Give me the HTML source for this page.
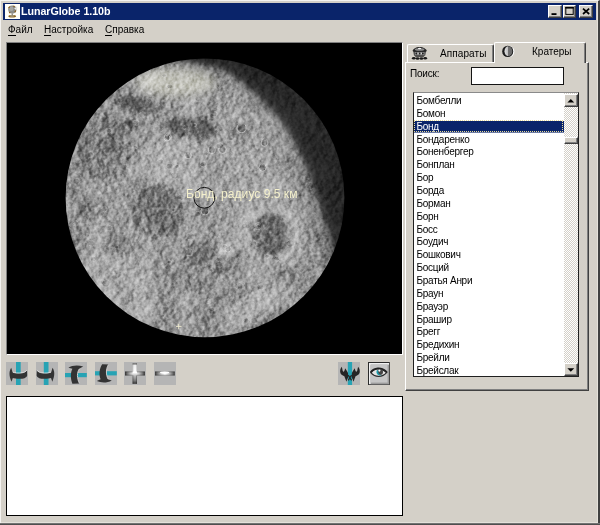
<!DOCTYPE html>
<html>
<head>
<meta charset="utf-8">
<title>LunarGlobe 1.10b</title>
<style>
html,body{margin:0;padding:0;}
body{width:600px;height:525px;overflow:hidden;background:#d4d0c8;position:relative;font-family:"Liberation Sans",sans-serif;font-size:10px;color:#000;}
.abs{position:absolute;}
#frame{left:0;top:0;width:600px;height:525px;box-sizing:border-box;border-top:1px solid #f4f3f0;border-left:1px solid #f4f3f0;border-right:2px solid #404040;border-bottom:none;}
#fb{left:0;top:523px;width:600px;height:2px;background:linear-gradient(#858585,#3c3c3c);}
#frame2{left:1px;top:1px;width:597px;height:522px;box-sizing:border-box;border-right:1px solid #e4e1da;border-bottom:1px solid #e4e1da;}
#title{left:3px;top:3px;width:593px;height:17px;background:#0a246a;}
#ticon{left:5px;top:4px;width:15px;height:15px;background:#fffef8;}
#ttext{left:21px;top:5px;height:12px;line-height:12px;font-size:10.7px;font-weight:bold;color:#fff;white-space:nowrap;letter-spacing:-0.05px;}
.tbtn{top:5px;width:13px;height:12.5px;background:#d4d0c8;box-sizing:border-box;border-top:1px solid #fff;border-left:1px solid #fff;border-right:1px solid #404040;border-bottom:1px solid #404040;box-shadow:inset -1px -1px 0 #808080;}
.menu{top:24.6px;height:10.6px;line-height:10.6px;font-size:10px;white-space:nowrap;}
.menu u{text-decoration:none;border-bottom:1px solid #000;}
#canvasb{left:6px;top:42px;width:397px;height:312.7px;box-sizing:border-box;border-top:1px solid #808080;border-left:1px solid #808080;border-right:1px solid #fff;border-bottom:1px solid #fff;background:#000;}
#canvas{left:7px;top:43px;width:395px;height:310.7px;background:#000;overflow:hidden;}
.tb{top:361.7px;width:21.8px;height:23px;background:#b5b5b5;overflow:hidden;}
#log{left:6px;top:395.9px;width:397px;height:120.1px;box-sizing:border-box;background:#fff;border:1px solid #000;}
#panel{left:405px;top:61.5px;width:184px;height:329.5px;box-sizing:border-box;border-top:1px solid #fff;border-left:1px solid #fff;border-right:1px solid #404040;border-bottom:1px solid #404040;box-shadow:inset -1px -1px 0 #808080;}
#tab1{left:407px;top:44px;width:86.5px;height:17.5px;box-sizing:border-box;border-top:1px solid #fff;border-left:1px solid #fff;border-right:1px solid #404040;border-radius:2px 2px 0 0;box-shadow:inset -1px 0 0 #808080;}
#tab2{left:494px;top:42px;width:92px;height:20.5px;box-sizing:border-box;background:#d4d0c8;border-top:1px solid #fff;border-left:1px solid #fff;border-right:1px solid #404040;border-radius:2px 2px 0 0;box-shadow:inset -1px 0 0 #808080;}
.lbl,.menu,#ttext,#items{will-change:transform;}
.lbl{white-space:nowrap;font-size:10px;line-height:12px;height:12px;}
#search{left:470.7px;top:67px;width:93.8px;height:18px;box-sizing:border-box;background:#fff;border:1px solid #141414;}
#list{left:413px;top:92.2px;width:166px;height:285.3px;box-sizing:border-box;background:#fff;border:1px solid #202020;border-top-color:#8a8a8a;overflow:hidden;}
#items{left:0;top:1.7px;width:150px;}
#items div{height:12.87px;line-height:12.87px;padding-left:2.5px;font-size:10px;white-space:nowrap;letter-spacing:-0.28px;}
#items div.sel{background:linear-gradient(#0a246a,#0a246a) 0 -0.6px/100% 12.2px no-repeat;color:#fff;position:relative;}
#items div.sel:before{content:"";position:absolute;left:0;top:-0.9px;width:149.4px;height:12.4px;box-sizing:border-box;border:1px dotted #e8dc9c;}
#sb{left:150.3px;top:0;width:14px;height:283.3px;background:repeating-conic-gradient(#ffffff 0% 25%, #d4d0c8 0% 50%) 0 0/2px 2px;}
.sbtn{left:0;width:14px;height:13.6px;box-sizing:border-box;background:#d4d0c8;border-top:1px solid #fff;border-left:1px solid #fff;border-right:1px solid #404040;border-bottom:1px solid #404040;box-shadow:inset -1px -1px 0 #808080;}
</style>
</head>
<body>
<div id="frame" class="abs"></div>
<div id="frame2" class="abs"></div>
<div id="fb" class="abs"></div>

<!-- title bar -->
<div id="title" class="abs"></div>
<div id="ticon" class="abs">
<svg width="15" height="15" viewBox="0 0 15 15">
<circle cx="7.3" cy="5.6" r="4.1" fill="#8c8c88"/>
<circle cx="6.3" cy="4.8" r="2.2" fill="#a8a8a4"/>
<path d="M3.6 4.2 L4.6 2.6 M9.8 8.2 L10.8 6.4 M4.2 8.2 L5.2 9.2 M8.4 2.0 L9.6 2.8" stroke="#8a5a14" stroke-width="1.1"/>
<path d="M9.2 4.6 L12 2.8 L11.2 6" fill="#f4f4f0" stroke="#d0d0cc" stroke-width="0.4"/>
<ellipse cx="7.2" cy="12.2" rx="3.9" ry="1.3" fill="#8a6420"/>
<ellipse cx="7.0" cy="11.9" rx="2.0" ry="0.6" fill="#b8b4a8"/>
<rect x="6.6" y="9.6" width="1.2" height="2" fill="#80796a"/>
</svg>
</div>
<div id="ttext" class="abs">LunarGlobe 1.10b</div>
<div class="abs tbtn" style="left:548.2px;width:13.4px;"><svg class="abs" style="left:0;top:0" width="11" height="11" viewBox="0 0 11 11"><rect x="2.5" y="7.2" width="5" height="1.8" fill="#000"/></svg></div>
<div class="abs tbtn" style="left:563px;"><svg class="abs" style="left:0;top:0" width="11" height="11" viewBox="0 0 11 11"><rect x="1.8" y="1.4" width="7.4" height="7" fill="none" stroke="#000" stroke-width="1"/><rect x="1.3" y="0.9" width="8.4" height="1.7" fill="#000"/></svg></div>
<div class="abs tbtn" style="left:579px;width:13.8px;"><svg class="abs" style="left:0;top:0" width="11" height="11" viewBox="0 0 11 11"><path d="M3 2.6 L9.2 8 M9.2 2.6 L3 8" stroke="#000" stroke-width="1.7"/></svg></div>

<!-- menu -->
<div class="abs menu" style="left:8px;"><u>Ф</u>айл</div>
<div class="abs menu" style="left:44px;"><u>Н</u>астройка</div>
<div class="abs menu" style="left:105px;"><u>С</u>правка</div>

<!-- canvas -->
<div id="canvasb" class="abs"></div>
<div id="canvas" class="abs">
<svg id="moon" class="abs" style="left:0;top:0" width="395.5" height="310.7" viewBox="7 43 395.5 310.7">
<defs>
<clipPath id="disc"><circle cx="205" cy="197.8" r="139.4"/></clipPath>
<radialGradient id="base" cx="0.45" cy="0.5" r="0.55">
<stop offset="0" stop-color="#a0a0a0"/><stop offset="0.8" stop-color="#989898"/><stop offset="1" stop-color="#868686"/>
</radialGradient>
<filter id="b3" x="-30%" y="-30%" width="160%" height="160%"><feGaussianBlur stdDeviation="2.2"/></filter>
<filter id="b5" x="-30%" y="-30%" width="160%" height="160%"><feGaussianBlur stdDeviation="5"/></filter>
<filter id="b2" x="-30%" y="-30%" width="160%" height="160%"><feGaussianBlur stdDeviation="1.6"/></filter>
<filter id="b12" x="-30%" y="-30%" width="160%" height="160%"><feGaussianBlur stdDeviation="10"/></filter>
<filter id="b2h" x="-30%" y="-30%" width="160%" height="160%"><feGaussianBlur stdDeviation="2.5"/></filter>
<filter id="b4" x="-30%" y="-30%" width="160%" height="160%"><feGaussianBlur stdDeviation="4"/></filter>
<filter id="b05" x="-30%" y="-30%" width="160%" height="160%"><feGaussianBlur stdDeviation="0.5"/></filter>
<filter id="b6" x="-30%" y="-30%" width="160%" height="160%"><feGaussianBlur stdDeviation="6"/></filter>
<filter id="noise" x="0" y="0" width="100%" height="100%" color-interpolation-filters="sRGB">
<feTurbulence type="fractalNoise" baseFrequency="0.38" numOctaves="2" seed="7" result="n"/>
<feColorMatrix type="matrix" values="0.6 0.6 0.6 0 -0.4  0.6 0.6 0.6 0 -0.4  0.6 0.6 0.6 0 -0.4  0 0 0 0 1"/>
</filter>
<filter id="bump" x="0" y="0" width="100%" height="100%" color-interpolation-filters="sRGB">
<feTurbulence type="fractalNoise" baseFrequency="0.16" numOctaves="3" seed="12" result="t"/>
<feDiffuseLighting in="t" surfaceScale="1.5" diffuseConstant="1" lighting-color="#ffffff"><feDistantLight azimuth="190" elevation="30"/></feDiffuseLighting>
</filter>
<filter id="noise2" x="0" y="0" width="100%" height="100%" color-interpolation-filters="sRGB">
<feTurbulence type="fractalNoise" baseFrequency="0.045" numOctaves="3" seed="3" result="n"/>
<feColorMatrix type="matrix" values="0.6 0.6 0.6 0 -0.4  0.6 0.6 0.6 0 -0.4  0.6 0.6 0.6 0 -0.4  0 0 0 0 1"/>
</filter>
</defs>
<g clip-path="url(#disc)">
<circle cx="205" cy="197.8" r="140.4" fill="url(#base)"/>
<g id="blobs">
<!-- bright areas -->
<g filter="url(#b5)">
<ellipse cx="176" cy="82" rx="40" ry="14" fill="#c4c4bc"/>
<ellipse cx="170" cy="165" rx="35" ry="20" fill="#aeaeae"/>
<ellipse cx="270" cy="234" rx="33" ry="32" fill="#b4b4b4"/>
<ellipse cx="120" cy="285" rx="42" ry="24" fill="#adadad" transform="rotate(40 120 285)"/>
<ellipse cx="255" cy="305" rx="42" ry="15" fill="#ababab" transform="rotate(-32 255 305)"/>
<ellipse cx="250" cy="190" rx="36" ry="20" fill="#a4a4a4"/>
<ellipse cx="252" cy="135" rx="40" ry="38" fill="#a2a2a2"/>
</g>
<!-- dark maria -->
<g filter="url(#b3)">
<ellipse cx="136" cy="104.5" rx="24" ry="8" fill="#666666" transform="rotate(10 136 104.5)"/>
<ellipse cx="106" cy="150" rx="27" ry="32" fill="#7e7e7e" transform="rotate(18 106 150)"/>
<ellipse cx="192" cy="128" rx="25" ry="11" fill="#666666" transform="rotate(6 192 128)"/>
<ellipse cx="241" cy="130" rx="12" ry="8" fill="#868686"/>
<ellipse cx="158" cy="212" rx="27" ry="27" fill="#787878"/>
<ellipse cx="94" cy="209" rx="14" ry="10" fill="#808080"/>
<ellipse cx="119" cy="245" rx="16" ry="10" fill="#868686" transform="rotate(25 119 245)"/>
<ellipse cx="270" cy="234" rx="20" ry="20" fill="#6c6c6c" />
<ellipse cx="207" cy="258" rx="24" ry="15" fill="#7e7e7e" transform="rotate(20 207 258)"/>
<ellipse cx="196" cy="280" rx="18" ry="12" fill="#868686"/>
<ellipse cx="170" cy="280" rx="16" ry="13" fill="#909090"/>
<ellipse cx="205" cy="314" rx="18" ry="7" fill="#888888"/>
<ellipse cx="245" cy="284" rx="15" ry="9" fill="#909090"/>
</g>
<g filter="url(#b3)">
<ellipse cx="225" cy="249" rx="9" ry="7" fill="#bcbcbc"/>
</g>
<g filter="url(#b05)"><circle cx="211.8" cy="150" r="3.6" fill="#000" fill-opacity="0.18" stroke="#e0e0e0" stroke-opacity="0.75" stroke-width="0.9"/><path d="M209.3 147.5 A3.6 3.6 0 0 1 214.3 147.5" stroke="#000" stroke-opacity="0.35" stroke-width="0.9" fill="none"/><circle cx="222.5" cy="149.7" r="3.8" fill="#000" fill-opacity="0.18" stroke="#e0e0e0" stroke-opacity="0.75" stroke-width="0.9"/><path d="M219.8 147.0 A3.8 3.8 0 0 1 225.2 147.0" stroke="#000" stroke-opacity="0.35" stroke-width="0.9" fill="none"/><circle cx="168" cy="137" r="3.2" fill="#000" fill-opacity="0.18" stroke="#e0e0e0" stroke-opacity="0.75" stroke-width="0.9"/><path d="M165.8 134.8 A3.2 3.2 0 0 1 170.2 134.8" stroke="#000" stroke-opacity="0.35" stroke-width="0.9" fill="none"/><circle cx="188" cy="155.5" r="3.2" fill="#000" fill-opacity="0.18" stroke="#e0e0e0" stroke-opacity="0.75" stroke-width="0.9"/><path d="M185.8 153.3 A3.2 3.2 0 0 1 190.2 153.3" stroke="#000" stroke-opacity="0.35" stroke-width="0.9" fill="none"/><circle cx="264.5" cy="143" r="3.4" fill="#000" fill-opacity="0.18" stroke="#e0e0e0" stroke-opacity="0.75" stroke-width="0.9"/><path d="M262.1 140.6 A3.4 3.4 0 0 1 266.9 140.6" stroke="#000" stroke-opacity="0.35" stroke-width="0.9" fill="none"/><circle cx="262.6" cy="167.6" r="3.6" fill="#000" fill-opacity="0.18" stroke="#e0e0e0" stroke-opacity="0.75" stroke-width="0.9"/><path d="M260.1 165.1 A3.6 3.6 0 0 1 265.1 165.1" stroke="#000" stroke-opacity="0.35" stroke-width="0.9" fill="none"/><circle cx="241.6" cy="128" r="4.6" fill="#000" fill-opacity="0.18" stroke="#e0e0e0" stroke-opacity="0.75" stroke-width="0.9"/><path d="M238.4 124.8 A4.6 4.6 0 0 1 244.8 124.8" stroke="#000" stroke-opacity="0.35" stroke-width="0.9" fill="none"/><circle cx="167" cy="138" r="3" fill="#000" fill-opacity="0.18" stroke="#e0e0e0" stroke-opacity="0.75" stroke-width="0.9"/><path d="M164.9 135.9 A3 3 0 0 1 169.1 135.9" stroke="#000" stroke-opacity="0.35" stroke-width="0.9" fill="none"/><circle cx="205" cy="211" r="4" fill="#000" fill-opacity="0.18" stroke="#e0e0e0" stroke-opacity="0.75" stroke-width="0.9"/><path d="M202.2 208.2 A4 4 0 0 1 207.8 208.2" stroke="#000" stroke-opacity="0.35" stroke-width="0.9" fill="none"/><circle cx="228" cy="249" r="3" fill="#000" fill-opacity="0.18" stroke="#e0e0e0" stroke-opacity="0.75" stroke-width="0.9"/><path d="M225.9 246.9 A3 3 0 0 1 230.1 246.9" stroke="#000" stroke-opacity="0.35" stroke-width="0.9" fill="none"/></g>
<g filter="url(#b2)">
<circle cx="130" cy="123" r="3.6" fill="#3c3c3c"/>
</g>
<g><circle cx="109.6" cy="228.1" r="2.6" fill="#000" fill-opacity="0.10" stroke="#fff" stroke-opacity="0.28" stroke-width="0.8"/><path d="M107.8 226.3 A2.6 2.6 0 0 0 107.8 229.9" stroke="#000" stroke-opacity="0.3" stroke-width="0.8" fill="none"/><circle cx="87.5" cy="235.4" r="1.8" fill="#000" fill-opacity="0.10" stroke="#fff" stroke-opacity="0.28" stroke-width="0.8"/><path d="M86.2 234.1 A1.8 1.8 0 0 0 86.2 236.6" stroke="#000" stroke-opacity="0.3" stroke-width="0.8" fill="none"/><circle cx="241.7" cy="285.6" r="3.6" fill="#000" fill-opacity="0.10" stroke="#fff" stroke-opacity="0.28" stroke-width="0.8"/><path d="M239.2 283.1 A3.6 3.6 0 0 0 239.2 288.1" stroke="#000" stroke-opacity="0.3" stroke-width="0.8" fill="none"/><circle cx="161.0" cy="161.6" r="2.6" fill="#000" fill-opacity="0.10" stroke="#fff" stroke-opacity="0.28" stroke-width="0.8"/><path d="M159.2 159.8 A2.6 2.6 0 0 0 159.2 163.4" stroke="#000" stroke-opacity="0.3" stroke-width="0.8" fill="none"/><circle cx="190.9" cy="236.5" r="3.6" fill="#000" fill-opacity="0.10" stroke="#fff" stroke-opacity="0.28" stroke-width="0.8"/><path d="M188.4 234.0 A3.6 3.6 0 0 0 188.4 239.1" stroke="#000" stroke-opacity="0.3" stroke-width="0.8" fill="none"/><circle cx="136.4" cy="122.8" r="2.6" fill="#000" fill-opacity="0.10" stroke="#fff" stroke-opacity="0.28" stroke-width="0.8"/><path d="M134.6 121.0 A2.6 2.6 0 0 0 134.6 124.6" stroke="#000" stroke-opacity="0.3" stroke-width="0.8" fill="none"/><circle cx="308.1" cy="175.6" r="3.0" fill="#000" fill-opacity="0.10" stroke="#fff" stroke-opacity="0.28" stroke-width="0.8"/><path d="M306.0 173.5 A3.0 3.0 0 0 0 306.0 177.7" stroke="#000" stroke-opacity="0.3" stroke-width="0.8" fill="none"/><circle cx="142.8" cy="114.7" r="3.0" fill="#000" fill-opacity="0.10" stroke="#fff" stroke-opacity="0.28" stroke-width="0.8"/><path d="M140.7 112.6 A3.0 3.0 0 0 0 140.7 116.8" stroke="#000" stroke-opacity="0.3" stroke-width="0.8" fill="none"/><circle cx="227.0" cy="208.6" r="1.8" fill="#000" fill-opacity="0.10" stroke="#fff" stroke-opacity="0.28" stroke-width="0.8"/><path d="M225.7 207.4 A1.8 1.8 0 0 0 225.7 209.9" stroke="#000" stroke-opacity="0.3" stroke-width="0.8" fill="none"/><circle cx="109.6" cy="130.8" r="2.2" fill="#000" fill-opacity="0.10" stroke="#fff" stroke-opacity="0.28" stroke-width="0.8"/><path d="M108.1 129.2 A2.2 2.2 0 0 0 108.1 132.3" stroke="#000" stroke-opacity="0.3" stroke-width="0.8" fill="none"/><circle cx="91.2" cy="243.2" r="3.0" fill="#000" fill-opacity="0.10" stroke="#fff" stroke-opacity="0.28" stroke-width="0.8"/><path d="M89.1 241.1 A3.0 3.0 0 0 0 89.1 245.3" stroke="#000" stroke-opacity="0.3" stroke-width="0.8" fill="none"/><circle cx="211.3" cy="270.2" r="1.6" fill="#000" fill-opacity="0.10" stroke="#fff" stroke-opacity="0.28" stroke-width="0.8"/><path d="M210.2 269.1 A1.6 1.6 0 0 0 210.2 271.3" stroke="#000" stroke-opacity="0.3" stroke-width="0.8" fill="none"/><circle cx="157.3" cy="122.9" r="2.2" fill="#000" fill-opacity="0.10" stroke="#fff" stroke-opacity="0.28" stroke-width="0.8"/><path d="M155.8 121.4 A2.2 2.2 0 0 0 155.8 124.4" stroke="#000" stroke-opacity="0.3" stroke-width="0.8" fill="none"/><circle cx="122.3" cy="253.2" r="1.6" fill="#000" fill-opacity="0.10" stroke="#fff" stroke-opacity="0.28" stroke-width="0.8"/><path d="M121.2 252.1 A1.6 1.6 0 0 0 121.2 254.3" stroke="#000" stroke-opacity="0.3" stroke-width="0.8" fill="none"/><circle cx="184.6" cy="127.5" r="1.8" fill="#000" fill-opacity="0.10" stroke="#fff" stroke-opacity="0.28" stroke-width="0.8"/><path d="M183.3 126.2 A1.8 1.8 0 0 0 183.3 128.7" stroke="#000" stroke-opacity="0.3" stroke-width="0.8" fill="none"/><circle cx="181.3" cy="197.2" r="3.0" fill="#000" fill-opacity="0.10" stroke="#fff" stroke-opacity="0.28" stroke-width="0.8"/><path d="M179.2 195.1 A3.0 3.0 0 0 0 179.2 199.3" stroke="#000" stroke-opacity="0.3" stroke-width="0.8" fill="none"/><circle cx="212.5" cy="115.9" r="2.2" fill="#000" fill-opacity="0.10" stroke="#fff" stroke-opacity="0.28" stroke-width="0.8"/><path d="M211.0 114.4 A2.2 2.2 0 0 0 211.0 117.5" stroke="#000" stroke-opacity="0.3" stroke-width="0.8" fill="none"/><circle cx="106.3" cy="283.5" r="3.6" fill="#000" fill-opacity="0.10" stroke="#fff" stroke-opacity="0.28" stroke-width="0.8"/><path d="M103.8 281.0 A3.6 3.6 0 0 0 103.8 286.0" stroke="#000" stroke-opacity="0.3" stroke-width="0.8" fill="none"/><circle cx="264.4" cy="199.2" r="1.6" fill="#000" fill-opacity="0.10" stroke="#fff" stroke-opacity="0.28" stroke-width="0.8"/><path d="M263.3 198.1 A1.6 1.6 0 0 0 263.3 200.3" stroke="#000" stroke-opacity="0.3" stroke-width="0.8" fill="none"/><circle cx="75.6" cy="223.5" r="2.6" fill="#000" fill-opacity="0.10" stroke="#fff" stroke-opacity="0.28" stroke-width="0.8"/><path d="M73.8 221.7 A2.6 2.6 0 0 0 73.8 225.3" stroke="#000" stroke-opacity="0.3" stroke-width="0.8" fill="none"/><circle cx="117.0" cy="247.0" r="1.8" fill="#000" fill-opacity="0.10" stroke="#fff" stroke-opacity="0.28" stroke-width="0.8"/><path d="M115.8 245.7 A1.8 1.8 0 0 0 115.8 248.2" stroke="#000" stroke-opacity="0.3" stroke-width="0.8" fill="none"/><circle cx="216.2" cy="131.5" r="1.6" fill="#000" fill-opacity="0.10" stroke="#fff" stroke-opacity="0.28" stroke-width="0.8"/><path d="M215.1 130.4 A1.6 1.6 0 0 0 215.1 132.7" stroke="#000" stroke-opacity="0.3" stroke-width="0.8" fill="none"/><circle cx="197.9" cy="214.1" r="2.6" fill="#000" fill-opacity="0.10" stroke="#fff" stroke-opacity="0.28" stroke-width="0.8"/><path d="M196.1 212.2 A2.6 2.6 0 0 0 196.1 215.9" stroke="#000" stroke-opacity="0.3" stroke-width="0.8" fill="none"/><circle cx="206.3" cy="153.7" r="1.8" fill="#000" fill-opacity="0.10" stroke="#fff" stroke-opacity="0.28" stroke-width="0.8"/><path d="M205.0 152.5 A1.8 1.8 0 0 0 205.0 155.0" stroke="#000" stroke-opacity="0.3" stroke-width="0.8" fill="none"/><circle cx="200.3" cy="185.7" r="2.6" fill="#000" fill-opacity="0.10" stroke="#fff" stroke-opacity="0.28" stroke-width="0.8"/><path d="M198.5 183.9 A2.6 2.6 0 0 0 198.5 187.5" stroke="#000" stroke-opacity="0.3" stroke-width="0.8" fill="none"/><circle cx="220.2" cy="145.8" r="3.0" fill="#000" fill-opacity="0.10" stroke="#fff" stroke-opacity="0.28" stroke-width="0.8"/><path d="M218.1 143.7 A3.0 3.0 0 0 0 218.1 147.9" stroke="#000" stroke-opacity="0.3" stroke-width="0.8" fill="none"/><circle cx="239.5" cy="286.2" r="3.6" fill="#000" fill-opacity="0.10" stroke="#fff" stroke-opacity="0.28" stroke-width="0.8"/><path d="M237.0 283.7 A3.6 3.6 0 0 0 237.0 288.7" stroke="#000" stroke-opacity="0.3" stroke-width="0.8" fill="none"/><circle cx="214.5" cy="114.2" r="2.6" fill="#000" fill-opacity="0.10" stroke="#fff" stroke-opacity="0.28" stroke-width="0.8"/><path d="M212.6 112.4 A2.6 2.6 0 0 0 212.6 116.0" stroke="#000" stroke-opacity="0.3" stroke-width="0.8" fill="none"/><circle cx="267.7" cy="256.2" r="1.8" fill="#000" fill-opacity="0.10" stroke="#fff" stroke-opacity="0.28" stroke-width="0.8"/><path d="M266.4 255.0 A1.8 1.8 0 0 0 266.4 257.5" stroke="#000" stroke-opacity="0.3" stroke-width="0.8" fill="none"/><circle cx="326.7" cy="199.4" r="3.0" fill="#000" fill-opacity="0.10" stroke="#fff" stroke-opacity="0.28" stroke-width="0.8"/><path d="M324.6 197.3 A3.0 3.0 0 0 0 324.6 201.5" stroke="#000" stroke-opacity="0.3" stroke-width="0.8" fill="none"/><circle cx="162.6" cy="316.1" r="1.8" fill="#000" fill-opacity="0.10" stroke="#fff" stroke-opacity="0.28" stroke-width="0.8"/><path d="M161.3 314.8 A1.8 1.8 0 0 0 161.3 317.3" stroke="#000" stroke-opacity="0.3" stroke-width="0.8" fill="none"/><circle cx="254.6" cy="320.6" r="3.0" fill="#000" fill-opacity="0.10" stroke="#fff" stroke-opacity="0.28" stroke-width="0.8"/><path d="M252.5 318.5 A3.0 3.0 0 0 0 252.5 322.7" stroke="#000" stroke-opacity="0.3" stroke-width="0.8" fill="none"/><circle cx="177.7" cy="166.5" r="1.8" fill="#000" fill-opacity="0.10" stroke="#fff" stroke-opacity="0.28" stroke-width="0.8"/><path d="M176.5 165.2 A1.8 1.8 0 0 0 176.5 167.7" stroke="#000" stroke-opacity="0.3" stroke-width="0.8" fill="none"/><circle cx="219.4" cy="264.3" r="3.0" fill="#000" fill-opacity="0.10" stroke="#fff" stroke-opacity="0.28" stroke-width="0.8"/><path d="M217.3 262.2 A3.0 3.0 0 0 0 217.3 266.4" stroke="#000" stroke-opacity="0.3" stroke-width="0.8" fill="none"/><circle cx="169.8" cy="262.2" r="1.6" fill="#000" fill-opacity="0.10" stroke="#fff" stroke-opacity="0.28" stroke-width="0.8"/><path d="M168.7 261.1 A1.6 1.6 0 0 0 168.7 263.3" stroke="#000" stroke-opacity="0.3" stroke-width="0.8" fill="none"/><circle cx="257.9" cy="226.1" r="3.6" fill="#000" fill-opacity="0.10" stroke="#fff" stroke-opacity="0.28" stroke-width="0.8"/><path d="M255.3 223.6 A3.6 3.6 0 0 0 255.3 228.7" stroke="#000" stroke-opacity="0.3" stroke-width="0.8" fill="none"/><circle cx="208.5" cy="301.3" r="2.2" fill="#000" fill-opacity="0.10" stroke="#fff" stroke-opacity="0.28" stroke-width="0.8"/><path d="M207.0 299.7 A2.2 2.2 0 0 0 207.0 302.8" stroke="#000" stroke-opacity="0.3" stroke-width="0.8" fill="none"/><circle cx="170.1" cy="166.3" r="3.0" fill="#000" fill-opacity="0.10" stroke="#fff" stroke-opacity="0.28" stroke-width="0.8"/><path d="M168.0 164.2 A3.0 3.0 0 0 0 168.0 168.4" stroke="#000" stroke-opacity="0.3" stroke-width="0.8" fill="none"/><circle cx="104.5" cy="209.2" r="2.6" fill="#000" fill-opacity="0.10" stroke="#fff" stroke-opacity="0.28" stroke-width="0.8"/><path d="M102.6 207.4 A2.6 2.6 0 0 0 102.6 211.0" stroke="#000" stroke-opacity="0.3" stroke-width="0.8" fill="none"/><circle cx="225.2" cy="246.3" r="1.8" fill="#000" fill-opacity="0.10" stroke="#fff" stroke-opacity="0.28" stroke-width="0.8"/><path d="M224.0 245.0 A1.8 1.8 0 0 0 224.0 247.5" stroke="#000" stroke-opacity="0.3" stroke-width="0.8" fill="none"/><circle cx="231.2" cy="139.0" r="1.8" fill="#000" fill-opacity="0.10" stroke="#fff" stroke-opacity="0.28" stroke-width="0.8"/><path d="M230.0 137.7 A1.8 1.8 0 0 0 230.0 140.2" stroke="#000" stroke-opacity="0.3" stroke-width="0.8" fill="none"/><circle cx="260.9" cy="286.8" r="3.0" fill="#000" fill-opacity="0.10" stroke="#fff" stroke-opacity="0.28" stroke-width="0.8"/><path d="M258.8 284.7 A3.0 3.0 0 0 0 258.8 288.9" stroke="#000" stroke-opacity="0.3" stroke-width="0.8" fill="none"/><circle cx="246.4" cy="320.5" r="2.6" fill="#000" fill-opacity="0.10" stroke="#fff" stroke-opacity="0.28" stroke-width="0.8"/><path d="M244.6 318.7 A2.6 2.6 0 0 0 244.6 322.3" stroke="#000" stroke-opacity="0.3" stroke-width="0.8" fill="none"/><circle cx="135.8" cy="147.1" r="1.6" fill="#000" fill-opacity="0.10" stroke="#fff" stroke-opacity="0.28" stroke-width="0.8"/><path d="M134.7 146.0 A1.6 1.6 0 0 0 134.7 148.2" stroke="#000" stroke-opacity="0.3" stroke-width="0.8" fill="none"/><circle cx="277.2" cy="258.8" r="2.2" fill="#000" fill-opacity="0.10" stroke="#fff" stroke-opacity="0.28" stroke-width="0.8"/><path d="M275.6 257.2 A2.2 2.2 0 0 0 275.6 260.3" stroke="#000" stroke-opacity="0.3" stroke-width="0.8" fill="none"/><circle cx="212.1" cy="309.5" r="2.2" fill="#000" fill-opacity="0.10" stroke="#fff" stroke-opacity="0.28" stroke-width="0.8"/><path d="M210.5 308.0 A2.2 2.2 0 0 0 210.5 311.0" stroke="#000" stroke-opacity="0.3" stroke-width="0.8" fill="none"/><circle cx="93.7" cy="258.9" r="2.6" fill="#000" fill-opacity="0.10" stroke="#fff" stroke-opacity="0.28" stroke-width="0.8"/><path d="M91.8 257.1 A2.6 2.6 0 0 0 91.8 260.7" stroke="#000" stroke-opacity="0.3" stroke-width="0.8" fill="none"/><circle cx="189.1" cy="252.2" r="3.6" fill="#000" fill-opacity="0.10" stroke="#fff" stroke-opacity="0.28" stroke-width="0.8"/><path d="M186.6 249.7 A3.6 3.6 0 0 0 186.6 254.8" stroke="#000" stroke-opacity="0.3" stroke-width="0.8" fill="none"/><circle cx="250.4" cy="192.3" r="2.6" fill="#000" fill-opacity="0.10" stroke="#fff" stroke-opacity="0.28" stroke-width="0.8"/><path d="M248.6 190.5 A2.6 2.6 0 0 0 248.6 194.1" stroke="#000" stroke-opacity="0.3" stroke-width="0.8" fill="none"/><circle cx="90.5" cy="154.6" r="3.0" fill="#000" fill-opacity="0.10" stroke="#fff" stroke-opacity="0.28" stroke-width="0.8"/><path d="M88.4 152.5 A3.0 3.0 0 0 0 88.4 156.7" stroke="#000" stroke-opacity="0.3" stroke-width="0.8" fill="none"/><circle cx="258.4" cy="226.3" r="1.8" fill="#000" fill-opacity="0.10" stroke="#fff" stroke-opacity="0.28" stroke-width="0.8"/><path d="M257.1 225.1 A1.8 1.8 0 0 0 257.1 227.6" stroke="#000" stroke-opacity="0.3" stroke-width="0.8" fill="none"/><circle cx="203.8" cy="164.3" r="2.6" fill="#000" fill-opacity="0.10" stroke="#fff" stroke-opacity="0.28" stroke-width="0.8"/><path d="M202.0 162.5 A2.6 2.6 0 0 0 202.0 166.1" stroke="#000" stroke-opacity="0.3" stroke-width="0.8" fill="none"/><circle cx="173.4" cy="209.9" r="1.8" fill="#000" fill-opacity="0.10" stroke="#fff" stroke-opacity="0.28" stroke-width="0.8"/><path d="M172.2 208.6 A1.8 1.8 0 0 0 172.2 211.1" stroke="#000" stroke-opacity="0.3" stroke-width="0.8" fill="none"/><circle cx="184.8" cy="293.3" r="1.8" fill="#000" fill-opacity="0.10" stroke="#fff" stroke-opacity="0.28" stroke-width="0.8"/><path d="M183.6 292.0 A1.8 1.8 0 0 0 183.6 294.5" stroke="#000" stroke-opacity="0.3" stroke-width="0.8" fill="none"/><circle cx="245.1" cy="225.9" r="2.6" fill="#000" fill-opacity="0.10" stroke="#fff" stroke-opacity="0.28" stroke-width="0.8"/><path d="M243.3 224.1 A2.6 2.6 0 0 0 243.3 227.7" stroke="#000" stroke-opacity="0.3" stroke-width="0.8" fill="none"/><circle cx="310.2" cy="185.9" r="3.6" fill="#000" fill-opacity="0.10" stroke="#fff" stroke-opacity="0.28" stroke-width="0.8"/><path d="M307.7 183.4 A3.6 3.6 0 0 0 307.7 188.4" stroke="#000" stroke-opacity="0.3" stroke-width="0.8" fill="none"/><circle cx="76.8" cy="181.4" r="3.0" fill="#000" fill-opacity="0.10" stroke="#fff" stroke-opacity="0.28" stroke-width="0.8"/><path d="M74.7 179.3 A3.0 3.0 0 0 0 74.7 183.5" stroke="#000" stroke-opacity="0.3" stroke-width="0.8" fill="none"/><circle cx="221.2" cy="202.9" r="2.2" fill="#000" fill-opacity="0.10" stroke="#fff" stroke-opacity="0.28" stroke-width="0.8"/><path d="M219.7 201.3 A2.2 2.2 0 0 0 219.7 204.4" stroke="#000" stroke-opacity="0.3" stroke-width="0.8" fill="none"/><circle cx="164.7" cy="75.6" r="1.6" fill="#000" fill-opacity="0.10" stroke="#fff" stroke-opacity="0.28" stroke-width="0.8"/><path d="M163.6 74.5 A1.6 1.6 0 0 0 163.6 76.7" stroke="#000" stroke-opacity="0.3" stroke-width="0.8" fill="none"/><circle cx="174.6" cy="178.1" r="1.6" fill="#000" fill-opacity="0.10" stroke="#fff" stroke-opacity="0.28" stroke-width="0.8"/><path d="M173.5 177.0 A1.6 1.6 0 0 0 173.5 179.2" stroke="#000" stroke-opacity="0.3" stroke-width="0.8" fill="none"/><circle cx="194.9" cy="125.0" r="1.6" fill="#000" fill-opacity="0.10" stroke="#fff" stroke-opacity="0.28" stroke-width="0.8"/><path d="M193.8 123.9 A1.6 1.6 0 0 0 193.8 126.1" stroke="#000" stroke-opacity="0.3" stroke-width="0.8" fill="none"/><circle cx="290.8" cy="243.4" r="3.6" fill="#000" fill-opacity="0.10" stroke="#fff" stroke-opacity="0.28" stroke-width="0.8"/><path d="M288.3 240.9 A3.6 3.6 0 0 0 288.3 245.9" stroke="#000" stroke-opacity="0.3" stroke-width="0.8" fill="none"/><circle cx="326.8" cy="234.2" r="3.6" fill="#000" fill-opacity="0.10" stroke="#fff" stroke-opacity="0.28" stroke-width="0.8"/><path d="M324.3 231.7 A3.6 3.6 0 0 0 324.3 236.7" stroke="#000" stroke-opacity="0.3" stroke-width="0.8" fill="none"/><circle cx="170.3" cy="86.4" r="2.2" fill="#000" fill-opacity="0.10" stroke="#fff" stroke-opacity="0.28" stroke-width="0.8"/><path d="M168.7 84.8 A2.2 2.2 0 0 0 168.7 87.9" stroke="#000" stroke-opacity="0.3" stroke-width="0.8" fill="none"/><circle cx="138.8" cy="286.6" r="1.6" fill="#000" fill-opacity="0.10" stroke="#fff" stroke-opacity="0.28" stroke-width="0.8"/><path d="M137.6 285.5 A1.6 1.6 0 0 0 137.6 287.8" stroke="#000" stroke-opacity="0.3" stroke-width="0.8" fill="none"/><circle cx="262.8" cy="137.3" r="1.6" fill="#000" fill-opacity="0.10" stroke="#fff" stroke-opacity="0.28" stroke-width="0.8"/><path d="M261.7 136.1 A1.6 1.6 0 0 0 261.7 138.4" stroke="#000" stroke-opacity="0.3" stroke-width="0.8" fill="none"/><circle cx="269.3" cy="123.4" r="3.0" fill="#000" fill-opacity="0.10" stroke="#fff" stroke-opacity="0.28" stroke-width="0.8"/><path d="M267.2 121.3 A3.0 3.0 0 0 0 267.2 125.5" stroke="#000" stroke-opacity="0.3" stroke-width="0.8" fill="none"/><circle cx="161.4" cy="129.8" r="1.6" fill="#000" fill-opacity="0.10" stroke="#fff" stroke-opacity="0.28" stroke-width="0.8"/><path d="M160.3 128.6 A1.6 1.6 0 0 0 160.3 130.9" stroke="#000" stroke-opacity="0.3" stroke-width="0.8" fill="none"/><circle cx="175.0" cy="175.4" r="3.6" fill="#000" fill-opacity="0.10" stroke="#fff" stroke-opacity="0.28" stroke-width="0.8"/><path d="M172.5 172.9 A3.6 3.6 0 0 0 172.5 177.9" stroke="#000" stroke-opacity="0.3" stroke-width="0.8" fill="none"/><circle cx="254.1" cy="243.5" r="2.6" fill="#000" fill-opacity="0.10" stroke="#fff" stroke-opacity="0.28" stroke-width="0.8"/><path d="M252.2 241.6 A2.6 2.6 0 0 0 252.2 245.3" stroke="#000" stroke-opacity="0.3" stroke-width="0.8" fill="none"/></g>
</g>
<rect x="60" y="55" width="290" height="290" filter="url(#noise2)" style="mix-blend-mode:overlay" opacity="0.3"/>
<rect x="60" y="55" width="290" height="290" filter="url(#bump)" style="mix-blend-mode:overlay" opacity="0.6"/>
<rect x="60" y="55" width="290" height="290" filter="url(#noise)" style="mix-blend-mode:overlay" opacity="0.35"/>
<g id="shadow">
<path filter="url(#b12)" transform="translate(-8 3)" d="M160 30 L176 60 L200 63.5 L220 68 L240 80 L260 98 L280 120 L291 135 L301 156 L310 177 L317 197 L325 222 L333 247 L345 268 L420 268 L420 30 Z" fill="#000" opacity="0.2"/>
<path filter="url(#b2h)" d="M160 30 L176 60 L200 63.5 L220 68 L240 80 L260 98 L280 120 L291 135 L301 156 L310 177 L317 197 L325 222 L333 247 L345 268 L420 268 L420 30 Z" fill="#000" opacity="0.56"/>
<path filter="url(#b4)" transform="translate(5 -1)" d="M160 30 L176 60 L200 63.5 L220 68 L240 80 L260 98 L280 120 L291 135 L301 156 L310 177 L317 197 L325 222 L333 247 L345 268 L420 268 L420 30 Z" fill="#000" opacity="0.2"/>
</g>
</g>
<circle cx="204.3" cy="197.8" r="10.4" fill="none" stroke="#101010" stroke-width="1"/>
<text x="186" y="198.3" font-family="Liberation Sans, sans-serif" font-size="12" fill="#f4f0cc" textLength="111.5" lengthAdjust="spacingAndGlyphs">Бонд, радиус 9.5 км</text>
<path d="M176 326.4 H181.5 M178.7 323.8 V329" stroke="#f0ecd0" stroke-width="0.9"/>
</svg>
</div>

<!-- toolbar -->
<div class="abs tb" style="left:6px;"><svg class="abs" style="left:0;top:0" width="21.8" height="23" viewBox="0 0 21.8 23"><rect x="10" y="0" width="4.7" height="23" fill="#27a3b4"/><path d="M5.2 5.7 C3.2 9 2.6 13 5.5 19.7 L6.8 16 C9 16.9 16 17 18.5 16.2 C20 15.4 21 14.5 21.2 13.5 L21 8.2 C19.5 10 18 10.8 16 11 C12 11.6 9 11.2 6.6 10.2 Z" fill="#333"/><path d="M6.8 10.1 C9 11 12 11.4 16 10.8 C18 10.6 19.5 9.8 20.9 8.2" fill="none" stroke="#eee" stroke-width="0.8"/></svg></div>
<div class="abs tb" style="left:36px;"><svg class="abs" style="left:0;top:0" width="21.8" height="23" viewBox="0 0 21.8 23"><rect x="7.8" y="0" width="4.7" height="23" fill="#27a3b4"/><g transform="translate(21.8 0) scale(-1 1)"><path d="M5.2 5.7 C3.2 9 2.6 13 5.5 19.7 L6.8 16 C9 16.9 16 17 18.5 16.2 C20 15.4 21 14.5 21.2 13.5 L21 8.2 C19.5 10 18 10.8 16 11 C12 11.6 9 11.2 6.6 10.2 Z" fill="#333"/><path d="M6.8 10.1 C9 11 12 11.4 16 10.8 C18 10.6 19.5 9.8 20.9 8.2" fill="none" stroke="#eee" stroke-width="0.8"/></g></svg></div>
<div class="abs tb" style="left:65.2px;"><svg class="abs" style="left:0;top:0" width="21.8" height="23" viewBox="0 0 21.8 23"><rect x="0" y="11" width="21.8" height="4.2" fill="#27a3b4"/><path d="M3.4 5.8 C7 3.2 13 2.6 18.2 4.6 L14.6 6.6 C12 10.5 12 16 14.6 21.6 L7.4 21.8 C5.2 16 5.6 10.5 7.4 6.8 Z" fill="#333"/><path d="M14.4 6.8 C11.8 10.5 11.8 16 14.4 21.4" fill="none" stroke="#eee" stroke-width="0.8"/></svg></div>
<div class="abs tb" style="left:95.1px;"><svg class="abs" style="left:0;top:0" width="21.8" height="23" viewBox="0 0 21.8 23"><rect x="0" y="9.2" width="21.8" height="4.2" fill="#27a3b4"/><path d="M7.2 2.2 L13.6 2.4 C11 7 11 13 13.4 17.4 L16.8 18.4 C12 21.2 6 20.8 1.8 19 L5.6 17.2 C3.6 12 4.6 6 7.2 2.2 Z" fill="#333"/><path d="M13.4 2.6 C10.8 7 10.8 13 13.2 17.2" fill="none" stroke="#eee" stroke-width="0.8"/></svg></div>
<div class="abs tb" style="left:124.2px;"><svg class="abs" style="left:0;top:0" width="21.8" height="23" viewBox="0 0 21.8 23"><defs><linearGradient id="gv" x1="0" y1="0" x2="0" y2="1"><stop offset="0" stop-color="#555"/><stop offset="0.1" stop-color="#eee"/><stop offset="0.45" stop-color="#fff"/><stop offset="0.6" stop-color="#bbb"/><stop offset="0.85" stop-color="#777"/><stop offset="1" stop-color="#333"/></linearGradient><linearGradient id="gh" x1="0" y1="0" x2="1" y2="0"><stop offset="0" stop-color="#333"/><stop offset="0.12" stop-color="#777"/><stop offset="0.3" stop-color="#c8c8c8"/><stop offset="0.5" stop-color="#fff"/><stop offset="0.7" stop-color="#c8c8c8"/><stop offset="0.88" stop-color="#777"/><stop offset="1" stop-color="#333"/></linearGradient><linearGradient id="ge" x1="0" y1="0" x2="0" y2="1"><stop offset="0" stop-color="#222" stop-opacity="0.6"/><stop offset="0.3" stop-color="#222" stop-opacity="0"/><stop offset="0.7" stop-color="#222" stop-opacity="0"/><stop offset="1" stop-color="#222" stop-opacity="0.6"/></linearGradient><linearGradient id="ge2" x1="0" y1="0" x2="1" y2="0"><stop offset="0" stop-color="#222" stop-opacity="0.55"/><stop offset="0.3" stop-color="#222" stop-opacity="0"/><stop offset="0.7" stop-color="#222" stop-opacity="0"/><stop offset="1" stop-color="#222" stop-opacity="0.55"/></linearGradient></defs><rect x="1" y="9.6" width="19.9" height="3.8" fill="url(#gh)"/><rect x="1" y="9.6" width="19.9" height="3.8" fill="url(#ge)"/><rect x="8.6" y="1.4" width="4.4" height="20.4" fill="url(#gv)"/><rect x="8.6" y="13.4" width="4.4" height="8.4" fill="url(#ge2)"/><rect x="8.6" y="1.4" width="4.4" height="8.2" fill="url(#ge2)" opacity="0.5"/></svg></div>
<div class="abs tb" style="left:154.2px;"><svg class="abs" style="left:0;top:0" width="21.8" height="23" viewBox="0 0 21.8 23"><defs><linearGradient id="gh2" x1="0" y1="0" x2="1" y2="0"><stop offset="0" stop-color="#3a3a3a"/><stop offset="0.12" stop-color="#777"/><stop offset="0.3" stop-color="#c8c8c8"/><stop offset="0.5" stop-color="#fff"/><stop offset="0.7" stop-color="#c8c8c8"/><stop offset="0.88" stop-color="#777"/><stop offset="1" stop-color="#3a3a3a"/></linearGradient></defs><rect x="1" y="9.6" width="19.8" height="3.8" fill="url(#gh2)"/><rect x="1" y="9.6" width="19.8" height="3.8" fill="url(#ge)"/><ellipse cx="10.6" cy="10.6" rx="4.6" ry="1.1" fill="#fff"/></svg></div>
<div class="abs tb" style="left:338px;"><svg class="abs" style="left:0;top:0" width="21.8" height="23" viewBox="0 0 21.8 23"><rect x="9.8" y="0" width="4.3" height="23" fill="#27a3b4"/><path d="M3.8 4.8 C2.2 6.6 1.6 9.4 2.6 11.4 C3.4 12.8 4.8 13.4 6.2 14 C7 15.8 7.6 17.6 8.4 19.8 C8.8 18 9.4 16.6 10.2 15.4 L10 11 C9.2 9 8.2 7.6 7 6.2 C7 7.6 6.6 8.6 6 9.4 C5.6 10 4.8 9.6 4.6 8.6 C4.4 7.4 4.2 6 3.8 4.8 Z" fill="#242424"/><g transform="translate(23.9 0) scale(-1 1)"><path d="M3.8 4.8 C2.2 6.6 1.6 9.4 2.6 11.4 C3.4 12.8 4.8 13.4 6.2 14 C7 15.8 7.6 17.6 8.4 19.8 C8.8 18 9.4 16.6 10.2 15.4 L10 11 C9.2 9 8.2 7.6 7 6.2 C7 7.6 6.6 8.6 6 9.4 C5.6 10 4.8 9.6 4.6 8.6 C4.4 7.4 4.2 6 3.8 4.8 Z" fill="#242424"/></g><path d="M10.2 13.2 L13.6 18.4 M13.6 13.2 L10.2 18.4" stroke="#242424" stroke-width="1.3"/></svg></div>
<div class="abs tb" style="left:368px;top:362px;height:22.8px;background:none;"><svg class="abs" style="left:0;top:0" width="21.8" height="23" viewBox="0 0 21.8 23"><rect x="0" y="0" width="21.8" height="23" fill="#2c2c2c"/><rect x="1" y="1" width="20" height="21.2" fill="#f0f0f0"/><rect x="2.6" y="2.6" width="18.4" height="19.6" fill="#9c9c9c"/><rect x="2.6" y="2.6" width="17" height="18" fill="#c6c6c6"/><path d="M2.8 10.6 C6 6.2 13 4.6 18.8 10.4 C14 16 7 15.4 2.8 10.6 Z" fill="#e4e4e4" stroke="#2a2a2a" stroke-width="1.3"/><path d="M2.8 10.4 C6 5.8 13 4.4 18.8 10.2" fill="none" stroke="#222" stroke-width="2"/><circle cx="12" cy="10" r="3" fill="#444"/><path d="M8.6 8.4 C8 11 9 12.8 11.6 13.4 L14 13.2 C10.5 12.6 9.6 10.5 10.6 8 Z" fill="#1a9aaa"/><circle cx="11.4" cy="8.6" r="1.1" fill="#fff"/></svg></div>


<!-- log box -->
<div id="log" class="abs"></div>

<!-- right panel -->
<div id="panel" class="abs"></div>
<div id="tab1" class="abs"></div>
<div id="tab2" class="abs"></div>
<svg class="abs" style="left:411px;top:46px" width="18" height="15" viewBox="0 0 18 15">
<path d="M1.6 5 C1.8 3.2 5 1 8.6 1 C12.2 1 15.6 3.2 15.8 5 L14.6 6 H2.8 Z" fill="#262626"/>
<ellipse cx="8.6" cy="3.5" rx="4.8" ry="1.3" fill="#8e8e8e"/>
<ellipse cx="8.6" cy="2.5" rx="1.7" ry="0.8" fill="#f4f4f4"/>
<path d="M2.4 5.4 H14.8 L14.2 9.4 H3 Z" fill="#2c2c2c"/>
<rect x="3.6" y="6" width="10" height="3" fill="#909090"/>
<circle cx="5.4" cy="7.5" r="0.95" fill="#1c1c1c"/><circle cx="8.6" cy="7.5" r="0.95" fill="#1c1c1c"/><circle cx="11.8" cy="7.5" r="0.95" fill="#1c1c1c"/>
<rect x="6.6" y="6.9" width="0.9" height="1.2" fill="#f0f0f0"/><rect x="9.8" y="6.9" width="0.9" height="1.2" fill="#f0f0f0"/>
<path d="M3.4 9.4 H13.8 L12.6 10.8 H4.6 Z" fill="#262626"/>
<ellipse cx="2.8" cy="12.3" rx="1.9" ry="1.25" fill="#1a1a1a"/><ellipse cx="6.6" cy="12.4" rx="1.9" ry="1.25" fill="#1a1a1a"/><ellipse cx="10.4" cy="12.4" rx="1.9" ry="1.25" fill="#1a1a1a"/><ellipse cx="14.2" cy="12.3" rx="1.9" ry="1.25" fill="#1a1a1a"/>
</svg>
<svg class="abs" style="left:501px;top:45px" width="15" height="13" viewBox="0 0 15 13">
<defs><linearGradient id="mg" x1="0" y1="0" x2="1" y2="0"><stop offset="0" stop-color="#e0e0e0"/><stop offset="0.42" stop-color="#c0c0c0"/><stop offset="0.5" stop-color="#707070"/><stop offset="1" stop-color="#6a6a6a"/></linearGradient></defs>
<ellipse cx="8" cy="6.5" rx="5.4" ry="5.6" fill="#fbfbfb"/>
<ellipse cx="6.7" cy="6.4" rx="5.5" ry="5.7" fill="#1c1c1c"/>
<ellipse cx="7.4" cy="6.2" rx="3.9" ry="5" fill="url(#mg)"/>
</svg>
<div class="abs lbl" style="left:440px;top:47.5px;letter-spacing:0.1px;">Аппараты</div>
<div class="abs lbl" style="left:531.5px;top:45.5px;">Кратеры</div>
<div class="abs lbl" style="left:410px;top:67.8px;letter-spacing:-0.2px;">Поиск:</div>
<div id="search" class="abs"></div>
<div id="list" class="abs">
<div id="items" class="abs">
<div>Бомбелли</div>
<div>Бомон</div>
<div class="sel">Бонд</div>
<div>Бондаренко</div>
<div>Боненбергер</div>
<div>Бонплан</div>
<div>Бор</div>
<div>Борда</div>
<div>Борман</div>
<div>Борн</div>
<div>Босс</div>
<div>Боудич</div>
<div>Бошкович</div>
<div>Босций</div>
<div>Братья Анри</div>
<div>Браун</div>
<div>Брауэр</div>
<div>Брашир</div>
<div>Брегг</div>
<div>Бредихин</div>
<div>Брейли</div>
<div>Брейслак</div>
</div>
<div id="sb" class="abs">
<div class="abs sbtn" style="top:0.6px;"><svg class="abs" style="left:0;top:0" width="12" height="12" viewBox="0 0 12 12"><path d="M2.4 7.6 L9.2 7.6 L5.8 4 Z" fill="#000"/></svg></div>
<div class="abs sbtn" style="top:44.2px;height:6.3px;"></div>
<div class="abs sbtn" style="top:269.6px;"><svg class="abs" style="left:0;top:0" width="12" height="12" viewBox="0 0 12 12"><path d="M2.4 4.2 L9.2 4.2 L5.8 7.8 Z" fill="#000"/></svg></div>
</div>
</div>
</body>
</html>
